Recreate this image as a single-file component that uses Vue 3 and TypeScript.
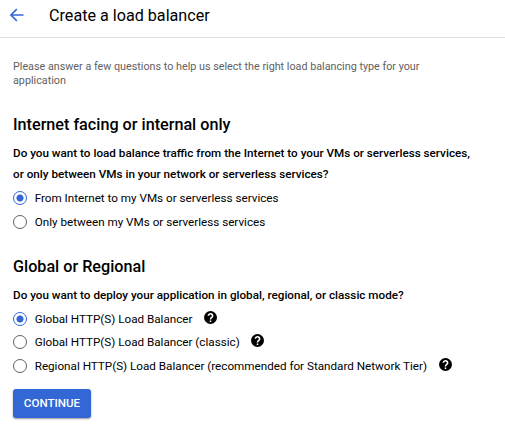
<script setup lang="ts">
import { ref } from 'vue'

interface Option {
  value: string
  label: string
  help?: boolean
}

const facing = ref<string>('internet')
const scope = ref<string>('global')

const facingOptions: Option[] = [
  { value: 'internet', label: 'From Internet to my VMs or serverless services' },
  { value: 'internal', label: 'Only between my VMs or serverless services' },
]

const scopeOptions: Option[] = [
  { value: 'global', label: 'Global HTTP(S) Load Balancer', help: true },
  { value: 'classic', label: 'Global HTTP(S) Load Balancer (classic)', help: true },
  { value: 'regional', label: 'Regional HTTP(S) Load Balancer (recommended for Standard Network Tier)', help: true },
]
</script>

<template>
  <div class="page">
    <header class="header">
      <svg class="back" viewBox="0 0 16 16" width="16" height="16">
        <path d="M14.500 8H2.200M7.800 2.100L1.900 8L7.800 13.900" fill="none" stroke="#3367d6" stroke-width="1.600" />
      </svg>
      <h1 class="title">Create a load balancer</h1>
    </header>
    <main class="content">
      <p class="intro">Please answer a few questions to help us select the right load balancing type for your<br />application</p>

      <section class="group">
        <h2 class="heading">Internet facing or internal only</h2>
        <p class="question">Do you want to load balance traffic from the Internet to your VMs or serverless services,<br />or only between VMs in your network or serverless services?</p>
        <div class="options">
          <label v-for="o in facingOptions" :key="o.value" class="option">
            <input v-model="facing" class="radio" type="radio" name="facing" :value="o.value" />
            <span class="label">{{ o.label }}</span>
          </label>
        </div>
      </section>

      <section class="group scope">
        <h2 class="heading">Global or Regional</h2>
        <p class="question">Do you want to deploy your application in global, regional, or classic mode?</p>
        <div class="options">
          <label v-for="o in scopeOptions" :key="o.value" class="option">
            <input v-model="scope" class="radio" type="radio" name="scope" :value="o.value" />
            <span class="label">{{ o.label }}</span>
            <svg v-if="o.help" class="help" viewBox="2 2 20 20" width="13" height="13">
              <circle cx="12" cy="12" r="10" fill="#000" />
              <path d="M8.700 9.300a3.300 3.100 0 1 1 5.400 2.400C12.800 12.700 12 13.100 12 15" fill="none" stroke="#fff" stroke-width="2.400" />
              <path d="M10.800 16.600h2.400V19h-2.400z" fill="#fff" />
            </svg>
          </label>
        </div>
      </section>

      <button class="continue" type="button">CONTINUE</button>
    </main>
  </div>
</template>

<style>
body {
  background: #fff;
}
</style>

<style scoped>
.page {
  width: 505px;
  height: 425px;
  overflow: hidden;
  font-family: Roboto, 'Liberation Sans', sans-serif;
  color: #000;
  white-space: nowrap;
}
.header {
  box-sizing: border-box;
  height: 38px;
  display: flex;
  align-items: center;
  padding: 0 0 6px 9px;
  border-bottom: 1px solid #dadce0;
}
.back {
  display: block;
  margin-top: -1px;
}
.title {
  margin: 0 0 0 24px;
  font-size: 16.150px;
  line-height: 20px;
  font-weight: 400;
}
.content {
  padding: 22px 13px 0;
}
.intro {
  margin: 0;
  font-size: 10.780px;
  line-height: 14px;
  color: #616161;
}
.group {
  margin-top: 27px;
}
.heading {
  margin: 0;
  font-size: 16.180px;
  line-height: 20px;
  font-weight: 500;
}
.question {
  margin: 8px 0 0;
  font-size: 11.700px;
  line-height: 21px;
  font-weight: 500;
}
.options {
  margin-top: 1px;
}
.option {
  display: flex;
  align-items: center;
  height: 24px;
}
.scope .option {
  height: 23.640px;
}
.radio {
  appearance: none;
  box-sizing: border-box;
  flex: none;
  width: 14px;
  height: 14px;
  margin: 0;
  border: 1px solid #616161;
  border-radius: 50%;
  background: #fff;
}
.radio:checked {
  border-color: #3367d6;
  background: radial-gradient(circle, #3367d6 3.200px, #fff 3.900px);
}
.label {
  margin-left: 7.700px;
  font-size: 11.680px;
  line-height: 16px;
}
.help {
  margin: -2.500px 0 0 11.500px;
}
.scope {
  margin-top: 23px;
}
.scope .options {
  margin-top: 0.750px;
}
.continue {
  display: block;
  width: 78px;
  height: 29px;
  margin-top: 11.330px;
  padding: 0 0 1px;
  border: 0;
  border-radius: 3px;
  background: #3367d6;
  color: #fff;
  font-family: inherit;
  font-size: 11.600px;
  line-height: 14px;
  font-weight: 500;
  box-shadow: 0 1px 2px rgba(0, 0, 0, 0.4);
}
</style>
